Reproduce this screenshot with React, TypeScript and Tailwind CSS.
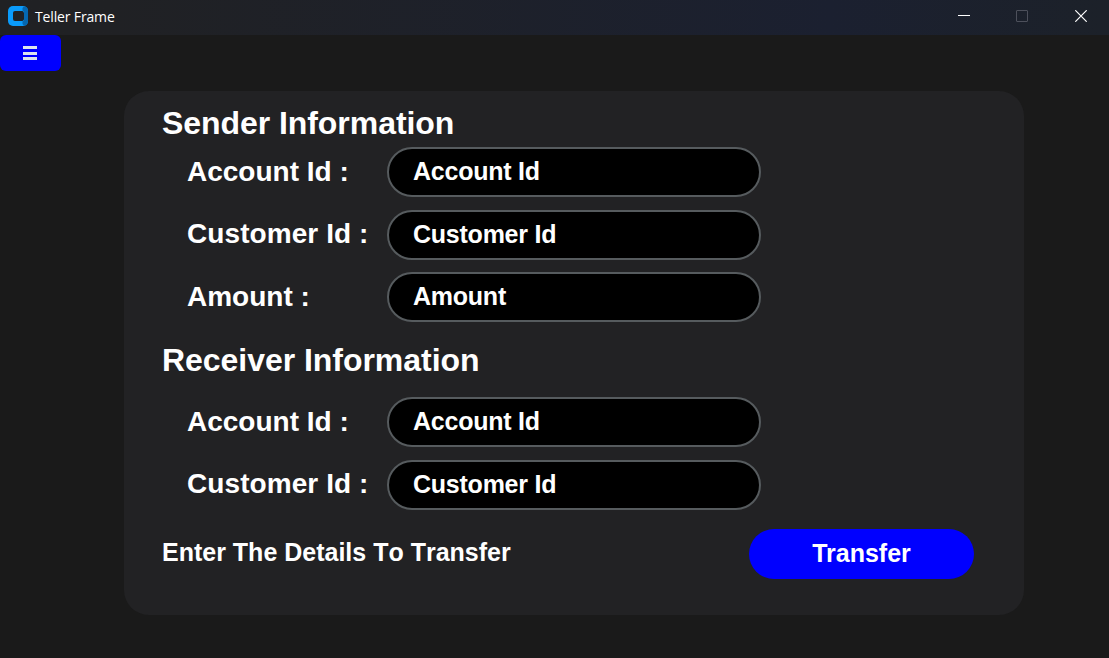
import React from "react";

type FieldProps = { label: string; className?: string; labelClassName?: string };

function Field({ label, className = "", labelClassName = "" }: FieldProps) {
  return (
    <label className={`flex h-[50px] items-center pl-[63px] ${className}`}>
      <span className={`w-[200px] shrink-0 whitespace-pre text-[28px] leading-[32px] ${labelClassName}`}>
        {label} :
      </span>
      <input
        type="text"
        placeholder={label}
        className="h-[50px] w-[374px] rounded-full border-2 border-[#565b5e] bg-black pl-6 pb-[1px] text-[25px] font-bold tracking-[-0.24px] text-white outline-none placeholder:text-white placeholder:opacity-100"
      />
    </label>
  );
}

function TitleBar() {
  return (
    <header className="flex h-[35px] items-center bg-linear-to-r from-[#202124] from-10% via-[#1b2030] via-75% to-[#1c2129]">
      <svg className="ml-2 -mt-[3px] h-5 w-5" viewBox="0 0 20 20">
        <rect width="20" height="20" rx="5" fill="#0a9bfb" />
        <path d="M16 0.2Q20 0.500 20 5V15Q20 19.500 16 19.8L14.500 18V15.500L16 14V6L14.500 4.500V2Z" fill="#0567b0" />
        <path d="M7 5H14.500L16 6.500V13.500L14.500 15H7Q5 15 5 13V7Q5 5 7 5Z" fill="#202124" />
      </svg>
      <h1 className="ml-[7px] -mt-[2px] font-['Open_Sans','Noto_Sans',sans-serif] text-[14px] font-normal leading-5 tracking-[-0.15px] text-white">
        Teller Frame
      </h1>
      <div className="ml-auto -mt-[3px] flex pr-[22px]">
        <button aria-label="Minimize" className="mr-[46px]">
          <svg className="h-3 w-3" viewBox="0 0 12 12">
            <path d="M0 5.500H12" stroke="#fff" />
          </svg>
        </button>
        <button aria-label="Maximize" disabled className="mr-[47px]">
          <svg className="h-3 w-3" viewBox="0 0 12 12">
            <rect x="0.500" y="0.500" width="11" height="11" rx="0.500" fill="none" stroke="#4d505b" />
          </svg>
        </button>
        <button aria-label="Close">
          <svg className="h-3 w-3" viewBox="0 0 12 12">
            <path d="M0.300 0.300L11.700 11.700M11.700 0.300L0.300 11.700" stroke="#fff" strokeWidth="1.200" />
          </svg>
        </button>
      </div>
    </header>
  );
}

export default function App() {
  return (
    <div className="flex h-[658px] w-[1109px] flex-col overflow-hidden bg-[#1a1a1a] font-['Liberation_Sans',Arial,sans-serif] text-white">
      <TitleBar />
      <button
        aria-label="Menu"
        className="flex h-9 w-[61px] items-center rounded-[6px] bg-[#0000ff] pl-[23px]"
      >
        <svg className="h-[14px] w-[14px]" viewBox="0 0 14 14" fill="#dce4ee">
          <rect width="14" height="3" />
          <rect y="6" width="14" height="3" />
          <rect y="11" width="14" height="3" />
        </svg>
      </button>
      <main className="ml-[124px] mt-5 flex h-[524px] w-[900px] flex-col rounded-[25px] bg-[#222224] font-bold">
        <h2 className="ml-[38px] mt-[14px] text-[32px] leading-[36px] tracking-[-0.06px]">Sender Information</h2>
        <Field label="Account Id" className="mt-[6px]" />
        <Field label="Customer Id" className="mt-[13px]" labelClassName="-mt-[2px] tracking-[0.08px]" />
        <Field label="Amount" className="mt-[12px]" />
        <h2 className="ml-[38px] mt-[20px] text-[32px] leading-[36px] tracking-[-0.04px]">Receiver Information</h2>
        <Field label="Account Id" className="mt-[19px]" />
        <Field label="Customer Id" className="mt-[13px]" labelClassName="-mt-[2px] tracking-[0.08px]" />
        <div className="mt-[19px] flex h-[50px] items-center justify-between pl-[38px] pr-[50px] text-[25px] leading-[30px]">
          <p className="-mt-[5px] [font-kerning:none]">Enter The Details To Transfer</p>
          <button className="h-[50px] w-[225px] rounded-full bg-[#0000ff] pb-[2px]">Transfer</button>
        </div>
      </main>
    </div>
  );
}
